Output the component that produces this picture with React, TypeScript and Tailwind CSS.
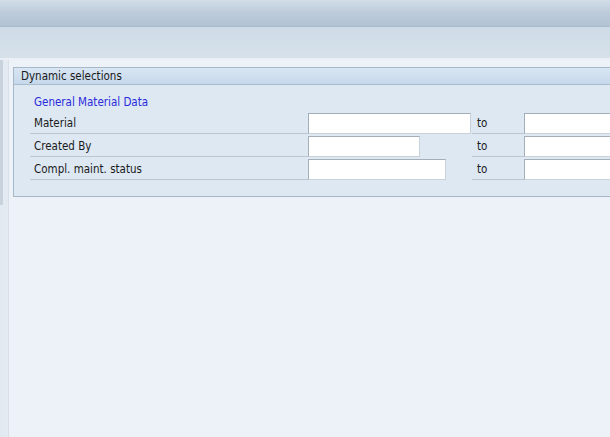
import React from "react";

const rows = [
  { label: "Material", w: "w-[163px]" },
  { label: "Created By", w: "w-[112px]" },
  { label: "Compl. maint. status", w: "w-[138px]" },
];

function Field({ className }: { className: string }) {
  return (
    <div
      className={`h-[21px] bg-white border border-t-[#a3aeb9] border-l-[#a3aeb9] border-r-[#c9d1d9] border-b-[#c9d1d9] ${className}`}
    />
  );
}

export default function App() {
  return (
    <div
      className="w-[610px] h-[437px] overflow-hidden flex flex-col bg-[#edf1f8] text-[11.5px] text-[#1a1a1a]"
      style={{ fontFamily: '"DejaVu Sans Condensed", Tahoma, "Liberation Sans", sans-serif' }}
    >
      {/* title bar */}
      <div className="h-[27px] shrink-0 bg-gradient-to-b from-[#d2dde8] via-[#bccbda] to-[#b2c3d4] border-b border-[#a9bacb]" />
      {/* toolbar */}
      <div className="h-[31px] shrink-0 bg-gradient-to-b from-[#cfdbe6] to-[#d6e1ea]" />
      <div className="h-[2px] shrink-0 bg-[#e9eff5]" />

      <div className="flex flex-1 min-h-0">
        {/* left strip */}
        <div className="w-[9px] shrink-0 flex">
          <div className="w-[3px] flex flex-col">
            <div className="h-[145px] bg-[#c8d2dc]" />
            <div className="flex-1 bg-[#e3e9f0]" />
          </div>
          <div className="w-[5px] bg-[#e4eaf2]" />
          <div className="w-[1px] bg-[#d7dfe8]" />
        </div>

        <div className="flex-1 pl-[4px] pt-[7px]">
          <div className="w-[620px] border border-[#a8b8cb] bg-[#dde8f3]">
            <div className="h-[17px] flex items-center pt-[2px] pl-[7px] bg-gradient-to-b from-[#d9e6f3] to-[#c6d8eb] border-b border-[#a9bccf] leading-none">
              Dynamic selections
            </div>
            <div className="pl-[16px] pt-[7px] pb-[16px]">
              <div className="h-[19px] pl-[4px] pt-[2px] flex items-center text-[#2b2bdb]">General Material Data</div>
              {rows.map((r) => (
                <div key={r.label} className="h-[23px] flex items-end">
                  <div className="w-[278px] h-full flex items-center pt-[4px] pl-[4px] border-b border-[#bcc6cf]">
                    {r.label}
                  </div>
                  <div className="w-[164px] h-full flex items-end">
                    <Field className={r.w} />
                  </div>
                  <div className="w-[52px] h-full flex items-center pt-[4px] pl-[5px] border-b border-[#bcc6cf]">to</div>
                  <Field className="w-[100px]" />
                </div>
              ))}
            </div>
          </div>
        </div>
      </div>
    </div>
  );
}
